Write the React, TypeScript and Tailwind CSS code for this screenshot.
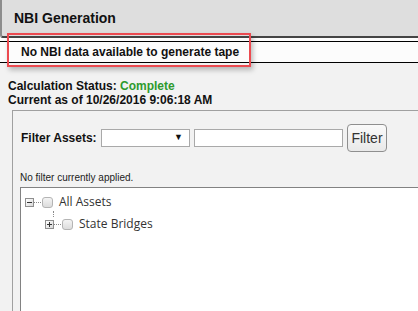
import React from "react";

function TreeToggle({ open }: { open: boolean }) {
  return (
    <span className="relative flex h-[9px] w-[9px] items-center justify-center border border-[#8e8e8e] bg-gradient-to-br from-white to-[#d8d8d8]">
      <span className="absolute h-px w-[5px] bg-[#333]" />
      {!open && <span className="absolute h-[5px] w-px bg-[#333]" />}
    </span>
  );
}

function TreeCheck() {
  return (
    <span className="block h-[11px] w-[11px] rounded-[3px] border border-[#b4b4b4] bg-gradient-to-b from-[#f4f4f4] to-[#dcdcdc]" />
  );
}

function Dots({ w }: { w: number }) {
  return <span className="block border-t border-dotted border-[#8a8a8a]" style={{ width: w }} />;
}

export default function App() {
  return (
    <div className="relative h-[311px] w-[418px] overflow-hidden bg-[#f2f2f2] font-['Liberation_Sans',Arial,sans-serif] text-[#111]">
      {/* header */}
      <div className="flex h-[38px] items-center rounded-bl-[3px] border-b-2 border-l-2 border-[#444] border-l-[#8c8c8c] bg-[#dedede] pl-[12px]">
        <h1 className="text-[14px] font-bold">NBI Generation</h1>
      </div>

      {/* message bar */}
      <div className="bg-[#fcfcfc] pt-[3px]">
        <div className="flex h-[22px] items-center border-y border-black pl-[21px] text-[12px] font-bold">
          No NBI data available to generate tape
        </div>
      </div>

      {/* annotation */}
      <div className="absolute left-[7px] top-[33px] h-[34px] w-[244px] border-2 border-[#ec4a50] shadow-[2px_3px_5px_rgba(0,0,0,0.25)]" />

      <div className="pl-[8px] pt-[16px] text-[12px] font-bold leading-[14px]">
        <div>
          Calculation Status: <span className="text-[#2e9a2e]">Complete</span>
        </div>
        <div>Current as of 10/26/2016 9:06:18 AM</div>
      </div>

      {/* filter panel */}
      <div className="ml-[12px] mt-[3px] w-[420px] border border-[#a0a0a0] pl-[7px] pt-[13px]">
        <div className="flex items-center">
          <span className="ml-px mr-[4px] w-[76px] text-[12px] font-bold">Filter Assets:</span>
          <div className="flex h-[18px] w-[89px] items-center justify-end border border-[#a9a9a9] bg-white pr-[6px] text-[9px]">
            ▼
          </div>
          <div className="ml-[4px] h-[18px] w-[149px] border border-[#a9a9a9] bg-white" />
          <button className="ml-[4px] h-[28px] w-[40px] rounded-[4px] border border-[#8f8f8f] bg-gradient-to-b from-[#fafafa] to-[#e9e9e9] text-[14px] text-[#333]">
            Filter
          </button>
        </div>

        <div className="mt-[20px] text-[10px] leading-[12px] text-[#222]">No filter currently applied.</div>

        <div className="mt-[3px] h-[200px] border border-[#828282] bg-white pl-[4px] pt-[9px] font-['Open_Sans','Noto_Sans',sans-serif] text-[12px] text-[#333]">
          <div className="flex h-[10px] items-center">
            <TreeToggle open />
            <Dots w={7} />
            <span className="ml-px"><TreeCheck /></span>
            <span className="ml-[6px]">All Assets</span>
          </div>
          <div className="ml-[28px] mt-[4px] h-[6px] w-px border-l border-dotted border-[#8a8a8a]" />
          <div className="ml-[20px] mt-[2px] flex h-[10px] items-center">
            <TreeToggle open={false} />
            <Dots w={7} />
            <span className="ml-px"><TreeCheck /></span>
            <span className="ml-[6px]">State Bridges</span>
          </div>
        </div>
      </div>
    </div>
  );
}
